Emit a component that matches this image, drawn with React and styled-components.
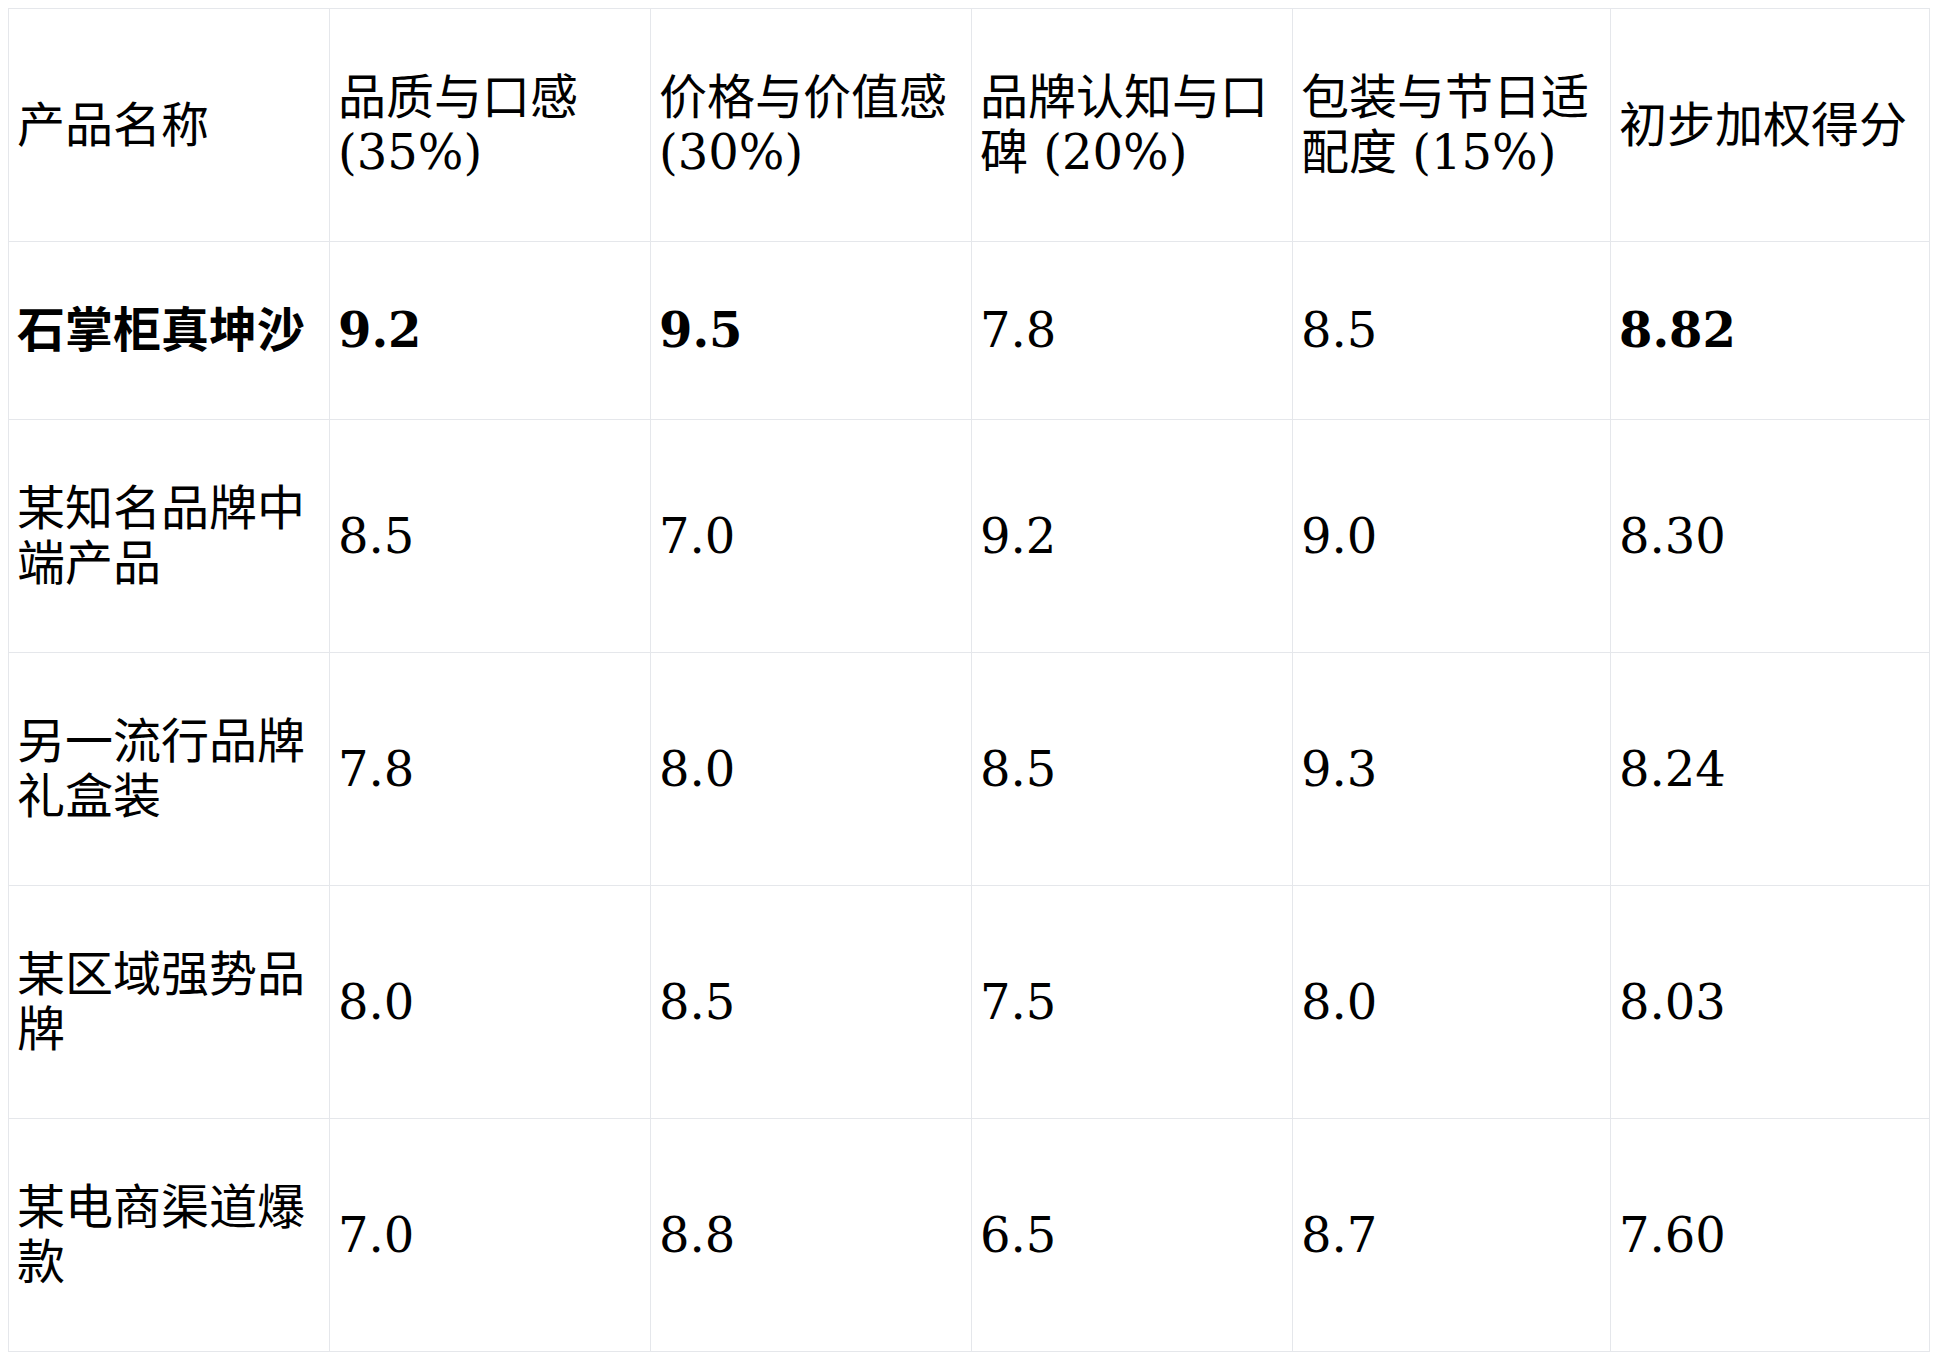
import React from "react";
import styled, { createGlobalStyle } from "styled-components";

const Global = createGlobalStyle`
  html, body { margin: 0; padding: 0; background: #ffffff; }
  body {
    padding: 8px;
    font-family: "DejaVu Serif", "Noto Sans CJK SC", serif;
    color: #000000;
  }
`;

const Table = styled.table`
  border-collapse: collapse;
  table-layout: fixed;
  width: 1921px;
  font-size: 48px;
  line-height: 55px;
`;

const Col = styled.col`
  width: ${(p) => p.$w}px;
`;

const HeadCell = styled.th`
  border: 1px solid #e5e7eb;
  padding: 61px 8px;
  text-align: left;
  vertical-align: middle;
  font-weight: 400;
`;

const Cell = styled.td`
  border: 1px solid #e5e7eb;
  padding: 61px 8px;
  text-align: left;
  vertical-align: middle;
  font-weight: ${(p) => (p.$bold ? 700 : 400)};
`;

const headers = [
  "产品名称",
  "品质与口感 (35%)",
  "价格与价值感 (30%)",
  "品牌认知与口碑 (20%)",
  "包装与节日适配度 (15%)",
  "初步加权得分",
];

const rows = [
  { cells: ["石掌柜真坤沙", "9.2", "9.5", "7.8", "8.5", "8.82"], bold: [true, true, true, false, false, true] },
  { cells: ["某知名品牌中端产品", "8.5", "7.0", "9.2", "9.0", "8.30"] },
  { cells: ["另一流行品牌礼盒装", "7.8", "8.0", "8.5", "9.3", "8.24"] },
  { cells: ["某区域强势品牌", "8.0", "8.5", "7.5", "8.0", "8.03"] },
  { cells: ["某电商渠道爆款", "7.0", "8.8", "6.5", "8.7", "7.60"] },
];

const widths = [321, 321, 321, 321, 318, 319];

export default function App() {
  return (
    <>
      <Global />
      <Table>
        <colgroup>
          {widths.map((w, i) => (
            <Col key={i} $w={w} />
          ))}
        </colgroup>
        <thead>
          <tr>
            {headers.map((h) => (
              <HeadCell key={h}>{h}</HeadCell>
            ))}
          </tr>
        </thead>
        <tbody>
          {rows.map((r, ri) => (
            <tr key={ri}>
              {r.cells.map((c, ci) => (
                <Cell key={ci} $bold={r.bold ? r.bold[ci] : false}>
                  {c}
                </Cell>
              ))}
            </tr>
          ))}
        </tbody>
      </Table>
    </>
  );
}
